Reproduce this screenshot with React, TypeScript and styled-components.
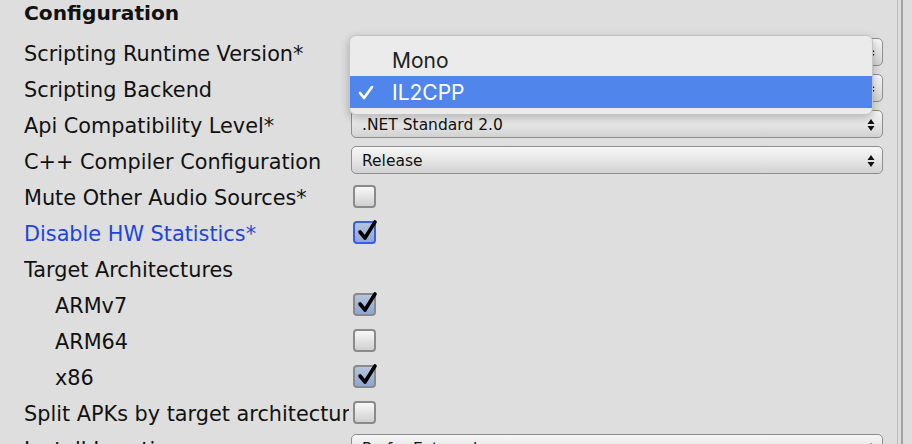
import React from "react";
import styled, { createGlobalStyle, css } from "styled-components";

const Global = createGlobalStyle`
  html, body { margin: 0; padding: 0; }
  body {
    background: #dedede;
    overflow: hidden;
    font-family: "DejaVu Sans", "Liberation Sans", sans-serif;
    color: #111;
  }
`;

const Page = styled.div`
  display: flex;
  width: 912px;
  height: 444px;
  overflow: hidden;
  position: relative;
`;

const Content = styled.div`
  width: 897px;
  flex: none;
  padding-left: 24px;
  box-sizing: border-box;
`;

const Gutter = styled.div`
  flex: 1;
  border-left: 1px solid #bdbdbd;
  position: relative;
  &::after {
    content: "";
    position: absolute;
    left: 3px;
    top: 0;
    bottom: 0;
    width: 2px;
    background: #a3a3a3;
  }
`;

const Heading = styled.div`
  height: 34px;
  font-weight: bold;
  font-size: 20.2px;
  line-height: 26px;
`;

const Row = styled.div`
  display: flex;
  align-items: center;
  height: 36px;
`;

const Label = styled.div<{ $indent?: boolean; $blue?: boolean }>`
  width: 327px;
  flex: none;
  box-sizing: border-box;
  padding-left: ${(p) => (p.$indent ? "31px" : "0")};
  padding-top: 3px;
  font-size: 20.8px;
  line-height: 26px;
  white-space: nowrap;
  overflow: hidden;
  color: ${(p) => (p.$blue ? "#1c45da" : "#111")};
`;

const LabelClip = styled.span`
  display: block;
  width: 325px;
  overflow: hidden;
`;

const Select = styled.div`
  width: 532px;
  height: 28px;
  box-sizing: border-box;
  border: 1.5px solid #8e8e8e;
  border-radius: 5px;
  background: linear-gradient(#f6f6f6, #e6e6e6 50%, #d2d2d2);
  display: flex;
  align-items: center;
  padding: 2px 0 0 10px;
  font-size: 15.5px;
  color: #111;
`;

const SelectText = styled.span`
  flex: 1;
`;

const Arrows = styled.svg`
  width: 8px;
  height: 12px;
  margin-right: 7px;
`;

const Box = styled.div<{ $checked?: boolean; $focus?: boolean }>`
  width: 23px;
  height: 23px;
  box-sizing: border-box;
  margin-left: 2px;
  margin-top: 1px;
  border-radius: 4px;
  border: 2px solid ${(p) => (p.$focus ? "#3a5ee0" : "#8a8a8a")};
  background: ${(p) =>
    p.$checked
      ? "linear-gradient(#b6c4dd, #8ea6d2)"
      : "linear-gradient(#f8f8f8, #cfcfcf)"};
  position: relative;
`;

const Tick = styled.svg`
  position: absolute;
  left: 1px;
  top: -5px;
  width: 22px;
  height: 24px;
  overflow: visible;
`;

const Popup = styled.div`
  position: absolute;
  left: 349px;
  top: 35px;
  width: 524px;
  height: 80px;
  box-sizing: border-box;
  background: #ebebeb;
  border: 1px solid #c4c4c4;
  border-radius: 7px;
  box-shadow: 0 3px 8px rgba(0, 0, 0, 0.25);
  padding-top: 8px;
  font-family: "Inter", "Liberation Sans", sans-serif;
  font-size: 21px;
  overflow: hidden;
`;

const Item = styled.div<{ $active?: boolean }>`
  height: 32px;
  display: flex;
  align-items: center;
  padding-left: 42px;
  position: relative;
  color: #222;
  ${(p) =>
    p.$active &&
    css`
      background: #5086ec;
      color: #fff;
    `}
`;

const MenuCheck = styled.svg`
  position: absolute;
  left: 8px;
  top: 9px;
  width: 16px;
  height: 15px;
`;

const TickMark = () => (
  <Tick viewBox="0 0 22 24">
    <path d="M4 14 L9 20 L19 4" fill="none" stroke="#000" strokeWidth="3.6" strokeLinecap="round" strokeLinejoin="round" />
  </Tick>
);

const Check = ({ checked, focus }: { checked?: boolean; focus?: boolean }) => (
  <Box $checked={checked} $focus={focus}>{checked && <TickMark />}</Box>
);

const Dropdown = ({ text }: { text?: string }) => (
  <Select>
    <SelectText>{text}</SelectText>
    <Arrows viewBox="0 0 8 12">
      <path d="M4 0 L7.5 5 H0.5 Z M4 12 L7.5 7 H0.5 Z" fill="#111" />
    </Arrows>
  </Select>
);

export default function App() {
  return (
    <>
      <Global />
      <Page>
        <Content>
          <Heading>Configuration</Heading>
          <Row>
            <Label>Scripting Runtime Version*</Label>
            <Dropdown />
          </Row>
          <Row>
            <Label>Scripting Backend</Label>
            <Dropdown />
          </Row>
          <Row>
            <Label>Api Compatibility Level*</Label>
            <Dropdown text=".NET Standard 2.0" />
          </Row>
          <Row>
            <Label>C++ Compiler Configuration</Label>
            <Dropdown text="Release" />
          </Row>
          <Row>
            <Label>Mute Other Audio Sources*</Label>
            <Check />
          </Row>
          <Row>
            <Label $blue>Disable HW Statistics*</Label>
            <Check checked focus />
          </Row>
          <Row>
            <Label>Target Architectures</Label>
          </Row>
          <Row>
            <Label $indent>ARMv7</Label>
            <Check checked />
          </Row>
          <Row>
            <Label $indent>ARM64</Label>
            <Check />
          </Row>
          <Row>
            <Label $indent>x86</Label>
            <Check checked />
          </Row>
          <Row>
            <Label><LabelClip>Split APKs by target architecture</LabelClip></Label>
            <Check />
          </Row>
          <Row>
            <Label>Install Location</Label>
            <Dropdown text="Prefer External" />
          </Row>
        </Content>
        <Gutter />
        <Popup>
          <Item>Mono</Item>
          <Item $active>
            <MenuCheck viewBox="0 0 16 15">
              <path d="M2 8 L6 13 L14 2" fill="none" stroke="#fff" strokeWidth="2.6" strokeLinecap="round" strokeLinejoin="round" />
            </MenuCheck>
            IL2CPP
          </Item>
        </Popup>
      </Page>
    </>
  );
}
